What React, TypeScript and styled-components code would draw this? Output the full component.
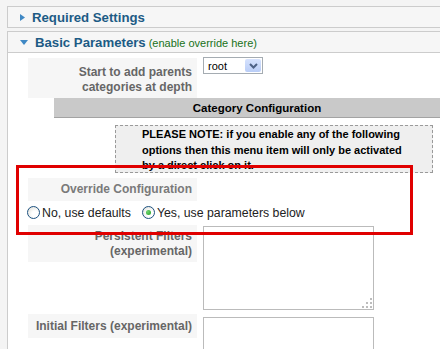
import React from 'react';
import styled, { createGlobalStyle } from 'styled-components';

const GlobalStyle = createGlobalStyle`
    html, body {
        margin: 0;
        padding: 0;
        background: #f4f4f4;
        overflow: hidden;
    }
    body {
        font-family: "Liberation Sans", Arial, sans-serif;
    }
`;

const Page = styled.div`
    position: relative;
    width: 460px;
    height: 349px;
    overflow: hidden;
    padding: 6px 0 0 7px;
    box-sizing: border-box;
    display: flex;
    flex-direction: column;
    gap: 3px;
`;

const Panel = styled.div`
    border: 1px solid #cccccc;
    border-right: none;
    background: #ffffff;
`;

const PanelHeader = styled.div<{ $open?: boolean }>`
    height: 20px;
    display: flex;
    align-items: center;
    gap: 7px;
    padding-left: 12px;
    background: #f6f6f6;
    border-bottom: ${(p) => (p.$open ? '1px solid #cccccc' : 'none')};
`;

const PanelTitle = styled.span`
    font-size: 13.2px;
    font-weight: bold;
    color: #1d5b85;
    white-space: nowrap;
`;

const Hint = styled.span`
    font-size: 11px;
    font-weight: normal;
    color: #197219;
    margin-left: 3px;
`;

const Toggle = styled.svg`
    flex: none;
    fill: #3f88c4;
`;

const Content = styled.div`
    display: flex;
    flex-direction: column;
`;

const Row = styled.div<{ $mt: number }>`
    display: flex;
    align-items: flex-start;
    gap: 6px;
    padding-left: 20px;
    margin-top: ${(p) => p.$mt}px;
`;

const Label = styled.div<{ $pad: string; $light?: boolean }>`
    width: 169px;
    box-sizing: border-box;
    padding: ${(p) => p.$pad};
    background: #f6f6f6;
    text-align: right;
    font-size: 12px;
    font-weight: bold;
    line-height: 15px;
    color: ${(p) => (p.$light ? '#7a7a7a' : '#666666')};
`;

const Select = styled.div`
    width: 60px;
    height: 17px;
    box-sizing: border-box;
    border: 1px solid #a5acb2;
    background: #ffffff;
    display: flex;
    align-items: center;
    justify-content: space-between;
    padding: 0 1px 0 4px;
    font-size: 11px;
    color: #000000;
`;

const SelectButton = styled.div`
    width: 16px;
    height: 13px;
    border-radius: 2px;
    background: linear-gradient(#d6e2fd, #b9cdf7);
    display: flex;
    align-items: center;
    justify-content: center;
`;

const SectionHead = styled.div`
    margin-left: 46px;
    height: 19px;
    background: #c9c9c9;
    border-bottom: 1px solid #a3a3a3;
    display: flex;
    align-items: center;
    justify-content: center;
    font-size: 11.5px;
    font-weight: bold;
    color: #000000;
`;

const Note = styled.div`
    margin: 7px 0 0 107px;
    width: 318px;
    height: 48px;
    box-sizing: border-box;
    border: 1px dashed #9a9a9a;
    background: #efefef;
    padding: 1px 0 0 26px;
    font-size: 11px;
    font-weight: bold;
    line-height: 15.5px;
    color: #000000;
    white-space: nowrap;
    overflow: hidden;
`;

const RadioRow = styled.div`
    display: flex;
    align-items: center;
    height: 17px;
    margin-top: 3px;
    padding-left: 19px;
    font-size: 12.3px;
    color: #222222;
`;

const RadioOption = styled.label`
    display: flex;
    align-items: center;
    gap: 2px;
    margin-right: 11px;
    white-space: nowrap;
`;

const RadioCircle = styled.span<{ $checked?: boolean }>`
    position: relative;
    width: 13px;
    height: 13px;
    box-sizing: border-box;
    border-radius: 50%;
    border: 1px solid #1c5180;
    background: radial-gradient(circle at 65% 65%, #ffffff 30%, #dcdcd4 100%);
    &::after {
        content: '';
        display: ${(p) => (p.$checked ? 'block' : 'none')};
        position: absolute;
        left: 3px;
        top: 3px;
        width: 5px;
        height: 5px;
        border-radius: 50%;
        background: radial-gradient(circle at 35% 35%, #6fd36f, #21a121);
    }
`;

const TextBox = styled.div<{ $mt: number }>`
    position: relative;
    width: 171px;
    height: 84px;
    box-sizing: border-box;
    margin-top: ${(p) => p.$mt}px;
    border: 1px solid #bbbbbb;
    background: #ffffff;
`;

const Grip = styled.svg`
    position: absolute;
    right: 1px;
    bottom: 1px;
    fill: #bdbdbd;
`;

const Highlight = styled.div`
    position: absolute;
    left: 16px;
    top: 165px;
    width: 397px;
    height: 70px;
    box-sizing: border-box;
    border: 3px solid #e00000;
    pointer-events: none;
`;

const ArrowRight = () => (
    <Toggle width="5" height="7" viewBox="0 0 5 7">
        <path d="M0 0 L5 3.5 L0 7 Z" />
    </Toggle>
);

const ArrowDown = () => (
    <Toggle width="8" height="5" viewBox="0 0 8 5">
        <path d="M0 0 L8 0 L4 5 Z" />
    </Toggle>
);

const ResizeGrip = () => (
    <Grip width="10" height="10" viewBox="0 0 10 10">
        <rect x="8" y="0" width="2" height="2" />
        <rect x="4" y="4" width="2" height="2" />
        <rect x="8" y="4" width="2" height="2" />
        <rect x="0" y="8" width="2" height="2" />
        <rect x="4" y="8" width="2" height="2" />
        <rect x="8" y="8" width="2" height="2" />
    </Grip>
);

const App = () => {
    return (
        <>
            <GlobalStyle />
            <Page>
                <Panel>
                    <PanelHeader>
                        <ArrowRight />
                        <PanelTitle>Required Settings</PanelTitle>
                    </PanelHeader>
                </Panel>
                <Panel>
                    <PanelHeader $open>
                        <ArrowDown />
                        <PanelTitle>
                            Basic Parameters<Hint>(enable override here)</Hint>
                        </PanelTitle>
                    </PanelHeader>
                    <Content>
                        <Row $mt={4}>
                            <Label $pad="7px 5px 3px 5px" style={{ marginTop: 1 }}>
                                Start to add parents
                                <br />
                                categories at depth
                            </Label>
                            <Select>
                                root
                                <SelectButton>
                                    <svg width="9" height="6" viewBox="0 0 9 6">
                                        <path d="M1 1 L4.5 4.5 L8 1" fill="none" stroke="#4d6185" strokeWidth="2" />
                                    </svg>
                                </SelectButton>
                            </Select>
                        </Row>
                        <SectionHead>Category Configuration</SectionHead>
                        <Note>
                            PLEASE NOTE: if you enable any of the following
                            <br />
                            options then this menu item will only be activated
                            <br />
                            by a direct click on it.
                        </Note>
                        <Row $mt={5}>
                            <Label $pad="4px 5px 4px 5px" $light>
                                Override Configuration
                            </Label>
                        </Row>
                        <RadioRow>
                            <RadioOption>
                                <RadioCircle />
                                No, use defaults
                            </RadioOption>
                            <RadioOption>
                                <RadioCircle $checked />
                                Yes, use parameters below
                            </RadioOption>
                        </RadioRow>
                        <Row $mt={4}>
                            <Label $pad="4px 5px 3px 5px">
                                Persistent Filters
                                <br />
                                (experimental)
                            </Label>
                            <TextBox $mt={1}>
                                <ResizeGrip />
                            </TextBox>
                        </Row>
                        <Row $mt={4}>
                            <Label $pad="5px 5px 4px 5px">Initial Filters (experimental)</Label>
                            <TextBox $mt={3} />
                        </Row>
                    </Content>
                </Panel>
                <Highlight />
            </Page>
        </>
    );
};

export default App;
